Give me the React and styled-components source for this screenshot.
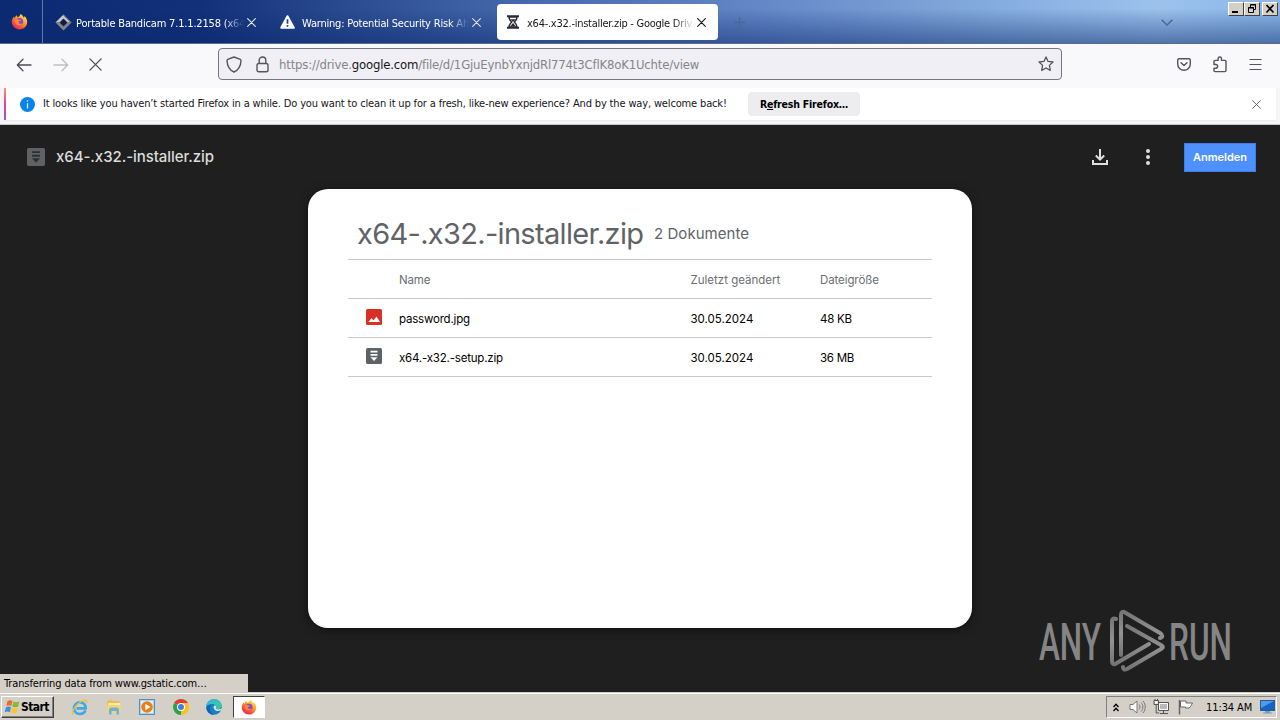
import React from 'react';
import styled, { createGlobalStyle } from 'styled-components';

const ui = '"DejaVu Sans Condensed", "DejaVu Sans", sans-serif';
const google = 'Inter, Roboto, sans-serif';

const files = [
  { name: 'password.jpg', date: '30.05.2024', size: '48 KB', type: 'image' },
  { name: 'x64.-x32.-setup.zip', date: '30.05.2024', size: '36 MB', type: 'zip' },
];

const CloseIcon = ({ size = 9, color = '#15141a', width = 1.2 }) => (
  <svg width={size} height={size} viewBox="0 0 10 10" fill="none" stroke={color} strokeWidth={width} strokeLinecap="round">
    <path d="M.7.7l8.6 8.6M9.3.7L.7 9.3" />
  </svg>
);

const FirefoxIcon = ({ size = 17 }) => (
  <svg width={size} height={size} viewBox="0 0 18 18">
    <defs>
      <linearGradient id="fox" x1="0.85" y1="0.05" x2="0.2" y2="0.95">
        <stop offset="0" stopColor="#fff04c" />
        <stop offset=".4" stopColor="#ff9a26" />
        <stop offset=".75" stopColor="#ff4a3d" />
        <stop offset="1" stopColor="#e8206e" />
      </linearGradient>
    </defs>
    <path fill="url(#fox)" d="M10 1c2 1 3 2.300 3.600 4 .5-.4.6-1 .5-1.700 2 1.700 3 3.900 3 6.300 0 4.400-3.600 7.800-8.100 7.800S.900 13.900.900 9.600c0-2.300.8-4.300 2.300-5.900 0 .8.200 1.300.7 1.700C4.400 4.100 5 3 6.100 2.300c0 1 .4 1.600 1.100 2C8.500 3.800 9.800 2.700 10 1z" />
    <circle cx="9" cy="9.300" r="3.900" fill="#8a45d8" />
    <path fill="#ff8b28" d="M4 7.500c1.500-1.600 3.200-1 4.200-.5 1 .4 2 .3 2.500.7-.6 1-2.200.8-2.700 1.700-.3.700.2 1.700 1.500 1.900 1.300.2 2.300-.6 2.900-.2-.8 2-5 3-7.200.4C4.200 10.300 3.700 9 4 7.500z" />
  </svg>
);

const BandicamIcon = () => (
  <svg width="17" height="17" viewBox="0 0 17 17">
    <path d="M8.500.5l8 8-8 8-8-8z" fill="#3a3d48" />
    <path d="M8.500.5l8 8h-4l-4-4-4 4h-4z" fill="#c3c7d0" />
    <path d="M.5 8.500l8 8 8-8h-4l-4 4-4-4z" fill="#7e8390" />
    <path d="M8.500 5l3.500 3.500L8.500 12 5 8.500z" fill="#101c46" />
    <path d="M8.500 1l7.500 7.500" stroke="#4b4f5c" />
  </svg>
);

const WarningIcon = () => (
  <svg width="15" height="14" viewBox="0 0 15 14">
    <path d="M7.500 1.200L13.800 12.800H1.200z" fill="#fff" stroke="#fff" strokeWidth="2" strokeLinejoin="round" />
    <path d="M7.500 4.300v4.400M7.500 10v1.700" stroke="#1f3f87" strokeWidth="1.700" />
  </svg>
);

const HourglassIcon = () => (
  <svg width="12" height="14" viewBox="0 0 12 14">
    <path d="M0 .2h12v2H0zM0 11.800h12v2H0z" fill="#2b2b30" />
    <path d="M2 2c0 2.500 1 3.400 2.600 5C3 8.600 2 9.500 2 12h8c0-2.500-1-3.400-2.600-5C9 5.400 10 4.500 10 2z" fill="#fff" stroke="#2b2b30" strokeWidth="1.500" />
    <path d="M3.500 4.200h5L6 7zM6 8l3 3.500H3z" fill="#2b2b30" />
  </svg>
);

const ArrowIcon = ({ color, flip }) => (
  <svg width="16" height="14" viewBox="0 0 16 14" fill="none" stroke={color} strokeWidth="1.300" strokeLinecap="round" strokeLinejoin="round">
    <path d={flip ? 'M1 7h13.500M9 1.300L14.700 7 9 12.700' : 'M15 7H1.500M7 1.300L1.300 7 7 12.700'} />
  </svg>
);

const ShieldIcon = () => (
  <svg width="16" height="17" viewBox="0 0 16 17" fill="none" stroke="#55545c" strokeWidth="1.400" strokeLinejoin="round">
    <path d="M8 1l6.300 2.300c.5.2.7.6.7 1.100C14.800 10 12.800 13.800 8 16 3.200 13.800 1.200 10 1 4.400c0-.5.2-.9.7-1.100z" />
  </svg>
);

const LockIcon = () => (
  <svg width="13" height="17" viewBox="0 0 13 17" fill="none" stroke="#55545c" strokeWidth="1.400">
    <rect x="1" y="7.500" width="11" height="8.300" rx="1.800" />
    <path d="M3.200 7.500V4.300a3.300 3.300 0 016.600 0v3.200" />
  </svg>
);

const StarIcon = () => (
  <svg width="16" height="16" viewBox="0 0 16 16" fill="none" stroke="#55545c" strokeWidth="1.300" strokeLinejoin="round">
    <path d="M8 .9l2.100 4.500 4.900.6-3.600 3.400.9 5L8 12l-4.300 2.400.9-5L1 6l4.900-.6z" />
  </svg>
);

const PocketIcon = () => (
  <svg width="14" height="13" viewBox="0 0 14 13" fill="none" stroke="#55545c" strokeWidth="1.400" strokeLinecap="round" strokeLinejoin="round">
    <path d="M2.200.8h9.600c.8 0 1.500.6 1.500 1.400V6c0 3.500-2.800 6.200-6.300 6.200S.7 9.500.7 6V2.200C.7 1.400 1.400.8 2.200.8z" />
    <path d="M4 4.800l3 2.800 3-2.800" />
  </svg>
);

const PuzzleIcon = () => (
  <svg width="14" height="17" viewBox="0 0 14 17" fill="none" stroke="#55545c" strokeWidth="1.400" strokeLinejoin="round">
    <path d="M1 8.500V5.500c0-.7.4-1.100 1.100-1.100h3V2.700a1.700 1.700 0 013.400 0v1.700h3.400c.7 0 1.100.4 1.100 1.100v9c0 .7-.4 1.100-1.100 1.100H2.100c-.7 0-1.100-.4-1.100-1.100v-2.300h1.800a1.800 1.800 0 000-3.700z" />
  </svg>
);

const MenuIcon = () => (
  <svg width="13" height="11" viewBox="0 0 13 11" stroke="#55545c" strokeWidth="1.200">
    <path d="M.5 .5h12M.5 5.500h12M.5 10.500h12" />
  </svg>
);

const ZipIcon = ({ size = 16, color = '#5f6368', mark = '#fff' }) => (
  <svg width={size} height={size} viewBox="0 0 16 16">
    <rect width="16" height="16" rx="1.500" fill={color} />
    <path d="M4.500 2.800h7v1.700h-7zM4.500 6h7v1.700h-7zM4.500 9.200h7L8 13z" fill={mark} />
  </svg>
);

const ImageIcon = () => (
  <svg width="16" height="16" viewBox="0 0 16 16">
    <rect width="16" height="16" rx="1.500" fill="#d93025" />
    <path d="M2.500 13l3-4 2 2.400 3-4 3.500 5.600z" fill="#fff" />
  </svg>
);

const Watermark = () => (
  <svg width="200" height="64" viewBox="0 0 200 64">
    <defs>
      <linearGradient id="wm" x1="0" y1="0" x2="0" y2="1">
        <stop offset="0" stopColor="#767676" />
        <stop offset=".5" stopColor="#929292" />
        <stop offset="1" stopColor="#747474" />
      </linearGradient>
    </defs>
    <g fill="#858585" fontFamily="Roboto, sans-serif" fontSize="52" fontWeight="500">
      <text x="1" y="51" textLength="62" lengthAdjust="spacingAndGlyphs">ANY</text>
      <text x="131" y="51" textLength="63" lengthAdjust="spacingAndGlyphs">RUN</text>
    </g>
    <g fill="none" stroke="url(#wm)" strokeWidth="4" strokeLinecap="round" strokeLinejoin="round">
      <path d="M78 10c-3-1-4 0-4 2v40c0 3 1.500 4 4 2.500L111 35" />
      <path d="M83 46V6c0-3 2-4 4-2.500L122 24c3 2 3 4 0 5" />
      <path d="M89 17l34 19c2.500 1.500 2.500 2.500 0 4L89 60c-3 1.500-4 0-4-2" />
    </g>
  </svg>
);

const StartFlag = () => (
  <svg width="17" height="16" viewBox="0 0 17 16">
    <path d="M3.500 2C5.500.8 7 1 8.500 2L7.300 7c-1.700-1-3.200-1-5 0z" fill="#ee6a2c" />
    <path d="M9.400 2.500c2 1 3.800 1 6 0l-1.300 5c-2 1-3.900 1-5.900 0z" fill="#84bb35" />
    <path d="M2 8.200c1.900-1 3.500-.9 5 0l-1.200 5c-1.600-1-3.200-1-5.100 0z" fill="#3e8ddd" />
    <path d="M8 8.700c2 1 3.800 1 5.900 0l-1.300 5c-2 1-3.900 1-5.900 0z" fill="#fbc72f" />
  </svg>
);

const ExplorerIcon = () => (
  <svg width="17" height="17" viewBox="0 0 17 17" fill="none">
    <path d="M14.500 11.500c-1 2.300-3 3.500-5.500 3.500-3.500 0-6-2.500-6-5.800S5.500 3.400 9 3.400s5.800 2.500 5.700 6H5.500" stroke="#3aa9e6" strokeWidth="2.600" />
    <path d="M2 15.500C-.5 12 7 3 13 1.300c2.500-.7 3.300.8 2.300 3" stroke="#eebc3b" strokeWidth="1.300" />
  </svg>
);

const FolderIcon = () => (
  <svg width="16" height="16" viewBox="0 0 16 16">
    <path d="M1 2l4-1.500 1 1.500h7.500v10H1z" fill="#e9bf55" />
    <path d="M2.200 4h12v9h-12z" fill="#fae9a0" />
    <path d="M1 6h13.500v8H1z" fill="#f3d574" />
    <path d="M3 15.500V11c0-1.500 1-2.400 2.500-2.400h5c1.500 0 2.500.9 2.500 2.400v4.500h-2.500V12h-5v3.500z" fill="#69b2dd" />
  </svg>
);

const PlayerIcon = () => (
  <svg width="16" height="16" viewBox="0 0 16 16">
    <rect x=".5" y=".5" width="15" height="15" fill="#a9d4ee" stroke="#4d91bd" />
    <rect x="2" y="2" width="12" height="12" fill="#dff1fb" />
    <circle cx="8" cy="8" r="5.800" fill="#ef7d12" />
    <path d="M6.300 4.800L11.500 8l-5.200 3.200z" fill="#fff" />
  </svg>
);

const ChromeIcon = () => (
  <svg width="16" height="16" viewBox="0 0 16 16">
    <path d="M8 8L1.100 4A8 8 0 0114.900 4z" fill="#e33b2e" />
    <path d="M8 8h-.1L14.900 4A8 8 0 018 16z" fill="#fbc116" />
    <path d="M8 8v8A8 8 0 011.100 4z" fill="#2ba24c" />
    <path d="M8 4h6.900L11.500 10z" fill="#fbc116" />
    <circle cx="8" cy="8" r="4" fill="#fff" />
    <circle cx="8" cy="8" r="3" fill="#3f7de8" />
  </svg>
);

const EdgeIcon = () => (
  <svg width="16" height="16" viewBox="0 0 16 16">
    <circle cx="8" cy="8" r="7.800" fill="#1680c9" />
    <path d="M.3 7C1 2.900 4.100.2 8 .2c4.500 0 7.800 3.200 7.800 6.300 0 2.300-1.800 3.700-4 3.700-1.600 0-2.300-.7-1.900-1.200 1-1.500-.5-4-3.700-4C3.500 5 1.200 6 .3 7z" fill="#3ac5a9" />
    <path d="M.3 7C1 2.900 4.100.2 8 .2c2 0 4 .8 5.400 2.300C10 1.500 3 2.500.3 7z" fill="#36b6e4" />
    <path d="M9.900 9c.6-1.200.2-2.200-.9-2.600-1.500 0-2 2.200-.5 4s3.500 2.100 7 .9l.5-1.800c-2 1.200-6.700 1.300-6.100-.5z" fill="#dfe2dd" />
    <path d="M6 5.500C3 7 3 13 8 15.700c-4 .3-7.300-2.900-7.700-7C1.500 6.500 4 5.500 6 5.500z" fill="#1563ae" />
  </svg>
);

const SpeakerIcon = () => (
  <svg width="17" height="16" viewBox="0 0 17 16" fill="none" stroke="#777">
    <path d="M1 5.500h3L8 2v12l-4-3.500H1z" fill="#fff" />
    <path d="M10 5.500c1.300 1.500 1.300 3.500 0 5M12 3.500c2.500 2.500 2.500 6.500 0 9M14 2c3 3.500 3 8.500 0 12" />
  </svg>
);

const NetworkIcon = () => (
  <svg width="17" height="16" viewBox="0 0 17 16" fill="none">
    <path d="M5.500 3.500h10v8h-10z" fill="#b9b9b9" stroke="#555" />
    <path d="M6.500 4.500h8v6h-8z" stroke="#fff" />
    <path d="M10.500 12v2M7 14.500h8" stroke="#555" />
    <path d="M1 1.500h4.500v4H1zM3.200 5.500V14h3" stroke="#555" />
    <path d="M2 0v2M4.500 0v2" stroke="#555" />
    <path d="M2 2.500h2.500v2H2z" fill="#fff" />
  </svg>
);

const FlagIcon = () => (
  <svg width="17" height="16" viewBox="0 0 17 16">
    <path d="M2.500 1v14.500" stroke="#666" strokeWidth="1.500" />
    <path d="M3.500 2h5.500v2h6.500c-1 1.500-1.500 3.500-3.500 5H8.500V8h-5z" fill="#fff" stroke="#666" />
  </svg>
);

const DesktopIcon = () => (
  <svg width="15" height="14" viewBox="0 0 15 14">
    <rect x=".5" y=".5" width="14" height="10" fill="#1763c5" stroke="#2e5a92" />
    <path d="M1 1h13L1 8z" fill="#4f9bee" />
    <path d="M5 11h5v1.500h2v1H3v-1h2z" fill="#7d9bbd" />
  </svg>
);

export default function App() {
  return (
    <Screen>
      <GlobalStyle />
      <TabStrip>
        <PinnedTab><FirefoxIcon /></PinnedTab>
        <Tab $width={224}>
          <TabIcon $left={12}><BandicamIcon /></TabIcon>
          <TabLabel $width={168} $indent={1} $fit={-0.18}>Portable Bandicam 7.1.1.2158 (x64</TabLabel>
          <CloseIcon color="#e4eafb" />
        </Tab>
        <Tab $width={226}>
          <TabIcon $left={13}><WarningIcon /></TabIcon>
          <TabLabel $width={167} $indent={2} $fit={-0.2}>Warning: Potential Security Risk Ah</TabLabel>
          <CloseIcon color="#dbe4f8" />
        </Tab>
        <Tab $width={221} $active>
          <TabIcon $left={10}><HourglassIcon /></TabIcon>
          <TabLabel $width={167} $fit={-0.26}>x64-.x32.-installer.zip - Google Driv</TabLabel>
          <CloseIcon />
        </Tab>
        <NewTab>
          <svg width="11" height="11" viewBox="0 0 11 11" stroke="#4d6694" strokeWidth="1.300"><path d="M0 5.500h11M5.500 0v11" /></svg>
        </NewTab>
        <AllTabs>
          <svg width="12" height="7" viewBox="0 0 12 7" fill="none" stroke="#48689c" strokeWidth="1.500"><path d="M.6.8L6 6l5.400-5.200" /></svg>
        </AllTabs>
        <WindowButtons>
          <WindowButton>
            <svg width="12" height="10" viewBox="0 0 12 10"><path d="M2 7h6v2H2z" /></svg>
          </WindowButton>
          <WindowButton>
            <svg width="12" height="10" viewBox="0 0 12 10" fill="none" stroke="#000"><path d="M4.500 3V.5h5v5H8M4 1h6M2.500 3.500h5v5h-5zM2 4h6" /></svg>
          </WindowButton>
          <WindowButton $gap>
            <svg width="12" height="10" viewBox="0 0 12 10" stroke="#000" strokeWidth="1.700"><path d="M2.500 1l7 7.500M9.500 1l-7 7.500" /></svg>
          </WindowButton>
        </WindowButtons>
      </TabStrip>

      <NavBar>
        <NavButtons>
          <ArrowIcon color="#4c4b54" />
          <ArrowIcon color="#bdbdc3" flip />
          <CloseIcon size={13} color="#4c4b54" width={1} />
        </NavButtons>
        <UrlBar>
          <ShieldIcon />
          <LockIcon />
          <Url>https://drive.<b>google.com</b>/file/d/1GjuEynbYxnjdRl774t3CflK8oK1Uchte/view</Url>
          <StarIcon />
        </UrlBar>
        <NavTools>
          <PocketIcon />
          <PuzzleIcon />
          <MenuIcon />
        </NavTools>
      </NavBar>

      <NoticeArea>
        <Notice>
          <InfoDot>
            <svg width="15" height="15" viewBox="0 0 15 15"><circle cx="7.500" cy="7.500" r="7.500" fill="#0a84e8" /><path d="M7.500 3.200v1.600M7.500 6.200v5.300" stroke="#d8eeff" strokeWidth="1.300" /></svg>
          </InfoDot>
          <NoticeText>It looks like you haven’t started Firefox in a while. Do you want to clean it up for a fresh, like-new experience? And by the way, welcome back!</NoticeText>
          <RefreshButton><span>R<u>e</u>fresh Firefox…</span></RefreshButton>
          <NoticeClose><CloseIcon color="#5b5b66" width={1} /></NoticeClose>
        </Notice>
      </NoticeArea>

      <Viewer>
        <ViewerBar>
          <ZipIcon size={18} color="#5f6163" mark="#2a3034" />
          <ViewerTitle>x64-.x32.-installer.zip</ViewerTitle>
          <ViewerActions>
            <svg width="16" height="16" viewBox="0 0 16 16" fill="none" stroke="#dedede" strokeWidth="2"><path d="M8 0v10.500M3.800 6.500L8 10.700l4.200-4.200M1 11v4h14v-4" /></svg>
            <svg width="4" height="16" viewBox="0 0 4 16" fill="#dedede"><circle cx="2" cy="2" r="2" /><circle cx="2" cy="8" r="2" /><circle cx="2" cy="14" r="2" /></svg>
            <SignIn>Anmelden</SignIn>
          </ViewerActions>
        </ViewerBar>
        <Archive>
          <ArchiveHeader>
            <ArchiveTitle>x64-.x32.-installer.zip</ArchiveTitle>
            <ArchiveCount>2 Dokumente</ArchiveCount>
          </ArchiveHeader>
          <FileRow $head>
            <span />
            <Cell $fit={-0.15}>Name</Cell>
            <Cell>Zuletzt geändert</Cell>
            <Cell $fit={-0.1}>Dateigröße</Cell>
          </FileRow>
          {files.map((file) => (
            <FileRow key={file.name}>
              <FileIcon>{file.type === 'image' ? <ImageIcon /> : <ZipIcon />}</FileIcon>
              <Cell $fit={-0.2}>{file.name}</Cell>
              <Cell>{file.date}</Cell>
              <Cell $fit={-0.25}>{file.size}</Cell>
            </FileRow>
          ))}
        </Archive>
        <WatermarkBox><Watermark /></WatermarkBox>
        <StatusPanel>Transferring data from www.gstatic.com…</StatusPanel>
      </Viewer>

      <Taskbar>
        <StartButton><StartFlag />Start</StartButton>
        <QuickLaunch>
          <ExplorerIcon />
          <FolderIcon />
          <PlayerIcon />
          <ChromeIcon />
          <EdgeIcon />
        </QuickLaunch>
        <TaskButton><FirefoxIcon size={16} /></TaskButton>
        <Tray>
          <svg width="6" height="9" viewBox="0 0 6 9" fill="none" stroke="#000" strokeWidth="1.300"><path d="M.5 4L3 1.300 5.500 4M.5 8L3 5.300 5.500 8" /></svg>
          <TrayIcons>
            <SpeakerIcon />
            <NetworkIcon />
            <FlagIcon />
          </TrayIcons>
          <Clock>11:34 AM</Clock>
          <DesktopIcon />
        </Tray>
      </Taskbar>
    </Screen>
  );
}

const GlobalStyle = createGlobalStyle`
  * { box-sizing: border-box; }
  body { margin: 0; overflow: hidden; }
  svg { display: block; flex: none; }
`;

const Screen = styled.div`
  width: 1280px;
  height: 720px;
  display: flex;
  flex-direction: column;
  font-family: ${ui};
  font-size: 11px;
  white-space: nowrap;
  overflow: hidden;
`;

const TabStrip = styled.div`
  height: 44px;
  flex: none;
  display: flex;
  border-bottom: 1px solid #5a6b8c;
  background:
    linear-gradient(180deg, rgba(10, 40, 110, 0) 20%, rgba(10, 40, 110, 0.5) 100%),
    linear-gradient(90deg, #0c2a72 0, #12307a 200px, #2a4a8f 340px, #4568ad 520px, #6487c6 760px, #86addf 1000px, #9cc2ec 1160px, #8cb7e8 1280px);
`;

const PinnedTab = styled.div`
  width: 43px;
  padding: 13px 0 0 11px;
  border-right: 1px solid #5d76ab;
`;

const Tab = styled.div`
  width: ${(p) => p.$width}px;
  height: 36px;
  margin-top: 4px;
  margin-left: ${(p) => (p.$active ? 4 : 0)}px;
  display: flex;
  align-items: center;
  border-radius: 4px;
  color: ${(p) => (p.$active ? '#15141a' : '#fff')};
  background: ${(p) => (p.$active ? '#fff' : 'transparent')};
`;

const TabIcon = styled.div`
  width: 16px;
  margin-left: ${(p) => p.$left}px;
  margin-right: 4px;
`;

const TabLabel = styled.div`
  width: ${(p) => p.$width}px;
  margin: 2px 3px 0 ${(p) => p.$indent || 0}px;
  overflow: hidden;
  letter-spacing: ${(p) => p.$fit || 0}px;
  mask-image: linear-gradient(90deg, #000 88%, transparent 100%);
`;

const NewTab = styled.div`
  padding: 17px 0 0 16px;
`;

const AllTabs = styled.div`
  margin-left: auto;
  padding: 19px 55px 0 0;
`;

const WindowButtons = styled.div`
  display: flex;
  padding: 2px 2px 0 0;
`;

const WindowButton = styled.div`
  width: 16px;
  height: 14px;
  margin-left: ${(p) => (p.$gap ? 2 : 0)}px;
  padding: 1px;
  background: #d4d0c8;
  border: 1px solid;
  border-color: #fff #404040 #404040 #fff;
`;

const NavBar = styled.div`
  height: 44px;
  flex: none;
  display: flex;
  align-items: flex-start;
  background: #f9f9fb;
`;

const NavButtons = styled.div`
  width: 218px;
  padding: 14px 0 0 16px;
  display: flex;
  gap: 20.5px;
`;

const UrlBar = styled.div`
  width: 844px;
  height: 32px;
  margin-top: 4px;
  padding: 0 7px;
  display: flex;
  align-items: center;
  gap: 14px;
  border: 1px solid #77767e;
  border-radius: 4px;
  background: #f0f0f4;
`;

const Url = styled.div`
  flex: 1;
  margin-left: -4px;
  font-size: 13px;
  letter-spacing: -0.18px;
  color: #85848b;

  b {
    font-weight: 400;
    color: #15141a;
  }
`;

const NavTools = styled.div`
  margin-left: auto;
  height: 40px;
  padding-right: 18px;
  display: flex;
  align-items: center;
  gap: 22px;
`;

const NoticeArea = styled.div`
  height: 37px;
  flex: none;
  padding: 0 4px;
  border-bottom: 1px solid #c8c8cc;
  background: #f5f5f7;
`;

const Notice = styled.div`
  height: 32px;
  padding-left: 14px;
  display: flex;
  align-items: center;
  background: #fff;
  border-left: 2px solid;
  border-image: linear-gradient(#ff9a6c, #e6439b 45%, #9059d0) 1;
  box-shadow: 0 1px 1px #ececf0;
`;

const InfoDot = styled.div`
  width: 23px;
`;

const NoticeText = styled.div`
  width: 705px;
  padding-bottom: 1px;
  letter-spacing: -0.15px;
  color: #15141a;
`;

const RefreshButton = styled.div`
  width: 112px;
  height: 24px;
  display: flex;
  align-items: center;
  justify-content: center;
  border-radius: 4px;
  background: #ededf0;
  font-weight: 700;
  font-size: 10.5px;
  letter-spacing: -0.2px;
`;

const NoticeClose = styled.div`
  margin-left: auto;
  padding-right: 15px;
`;

const Viewer = styled.div`
  position: relative;
  flex: 1;
  background: #1f1f1f;
`;

const ViewerBar = styled.div`
  height: 64px;
  padding: 0 24px 0 27px;
  display: flex;
  align-items: center;
`;

const ViewerTitle = styled.div`
  margin-left: 11px;
  padding-bottom: 1px;
  font: 500 15px ${google};
  letter-spacing: -0.06px;
  color: #dcdcdc;
`;

const ViewerActions = styled.div`
  margin-left: auto;
  display: flex;
  align-items: center;

  svg + svg {
    margin-left: 38px;
  }
`;

const SignIn = styled.div`
  width: 72px;
  height: 29px;
  margin-left: 34px;
  margin-top: 1px;
  border: 1px solid #3f7fe8;
  background: #4d90fe;
  color: #fff;
  font: 600 11px/27px ${google};
  text-align: center;
`;

const Archive = styled.div`
  width: 664px;
  height: 439px;
  margin: 0 auto;
  padding: 0 40px;
  border-radius: 20px;
  background: #fff;
  box-shadow: 0 2px 10px rgba(0, 0, 0, 0.5);
`;

const ArchiveHeader = styled.div`
  height: 71px;
  padding: 19px 10px 0 9px;
  display: flex;
  align-items: center;
  border-bottom: 1px solid #c8c8c8;
  color: #5f6368;
  font-family: ${google};
`;

const ArchiveTitle = styled.div`
  width: 297px;
  font-size: 29px;
  letter-spacing: -0.68px;
`;

const ArchiveCount = styled.div`
  font-size: 15px;
  letter-spacing: 0.05px;
`;

const FileRow = styled.div`
  height: 39px;
  display: grid;
  grid-template-columns: 51px 291.5px 129.5px 1fr;
  align-items: center;
  border-bottom: 1px solid #c8c8c8;
  color: ${(p) => (p.$head ? '#6b6e72' : '#000')};
  font: 11.5px ${google};
`;

const FileIcon = styled.div`
  padding: 0 0 3px 18px;
`;

const Cell = styled.div`
  padding-top: 1px;
  letter-spacing: ${(p) => p.$fit || 0}px;
`;

const WatermarkBox = styled.div`
  position: absolute;
  left: 1038px;
  top: 484px;
`;

const StatusPanel = styled.div`
  position: absolute;
  left: 0;
  bottom: 0;
  width: 248px;
  height: 18px;
  padding-left: 4px;
  line-height: 20px;
  letter-spacing: -0.12px;
  background: #d4d0c8;
  color: #000;
`;

const Taskbar = styled.div`
  height: 28px;
  flex: none;
  padding: 2px 3px 1px 1px;
  display: flex;
  align-items: center;
  border-top: 1px solid #d4d0c8;
  box-shadow: inset 0 1px #fff;
  background: #d4d0c8;
`;

const StartButton = styled.div`
  width: 53px;
  height: 22px;
  display: flex;
  align-items: center;
  padding-left: 2px;
  border: 1px solid;
  border-color: #fff #404040 #404040 #fff;
  box-shadow: inset -1px -1px #808080;
  font-weight: 700;
  font-size: 12px;
  letter-spacing: -0.6px;
`;

const QuickLaunch = styled.div`
  width: 179px;
  padding-left: 17px;
  display: flex;
  gap: 17.5px;
`;

const TaskButton = styled.div`
  width: 32px;
  height: 22px;
  display: flex;
  align-items: center;
  justify-content: center;
  border: 1px solid;
  border-color: #404040 #fff #fff #404040;
  background: #fff;
`;

const Tray = styled.div`
  width: 171px;
  height: 22px;
  margin-left: auto;
  padding: 0 1px 0 6px;
  display: flex;
  align-items: center;
  border: 1px solid;
  border-color: #808080 #fff #fff #808080;
`;

const TrayIcons = styled.div`
  display: flex;
  gap: 7px;
  margin-left: 10px;
`;

const Clock = styled.div`
  width: 54px;
  margin-left: 12px;
  letter-spacing: -0.1px;
`;
